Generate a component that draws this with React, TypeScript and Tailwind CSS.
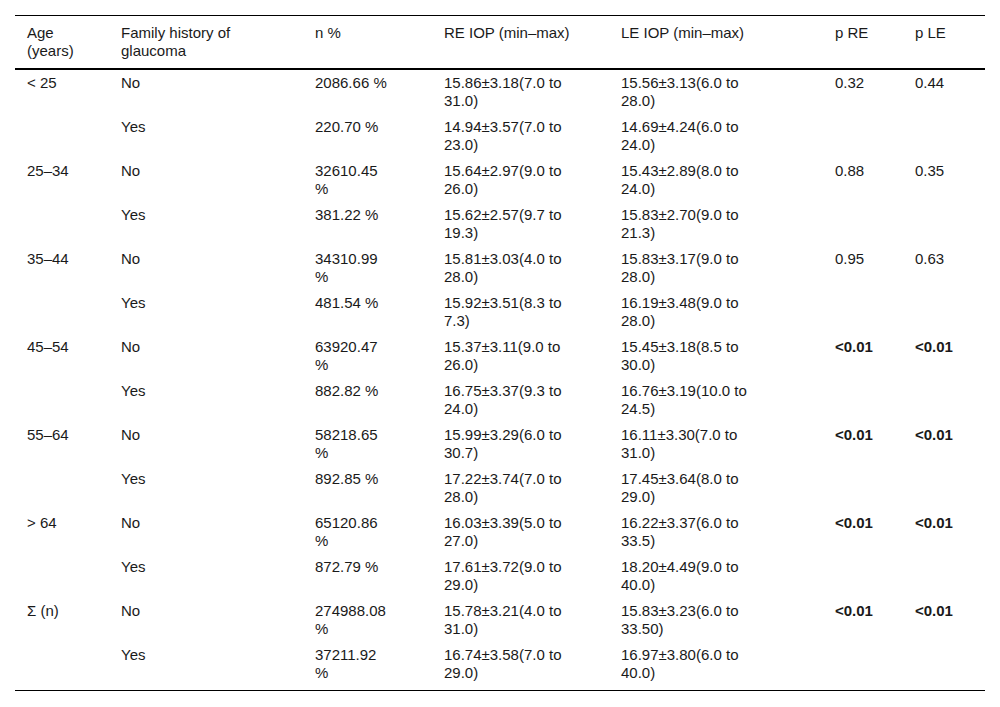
const rows = [
  { age: "< 25", fam: "No", n: "2086.66 %", re: "15.86±3.18(7.0 to 31.0)", le: "15.56±3.13(6.0 to 28.0)", pre: "0.32", ple: "0.44", bold: false },
  { age: "", fam: "Yes", n: "220.70 %", re: "14.94±3.57(7.0 to 23.0)", le: "14.69±4.24(6.0 to 24.0)", pre: "", ple: "", bold: false },
  { age: "25–34", fam: "No", n: "32610.45 %", re: "15.64±2.97(9.0 to 26.0)", le: "15.43±2.89(8.0 to 24.0)", pre: "0.88", ple: "0.35", bold: false },
  { age: "", fam: "Yes", n: "381.22 %", re: "15.62±2.57(9.7 to 19.3)", le: "15.83±2.70(9.0 to 21.3)", pre: "", ple: "", bold: false },
  { age: "35–44", fam: "No", n: "34310.99 %", re: "15.81±3.03(4.0 to 28.0)", le: "15.83±3.17(9.0 to 28.0)", pre: "0.95", ple: "0.63", bold: false },
  { age: "", fam: "Yes", n: "481.54 %", re: "15.92±3.51(8.3 to 7.3)", le: "16.19±3.48(9.0 to 28.0)", pre: "", ple: "", bold: false },
  { age: "45–54", fam: "No", n: "63920.47 %", re: "15.37±3.11(9.0 to 26.0)", le: "15.45±3.18(8.5 to 30.0)", pre: "<0.01", ple: "<0.01", bold: true },
  { age: "", fam: "Yes", n: "882.82 %", re: "16.75±3.37(9.3 to 24.0)", le: "16.76±3.19(10.0 to 24.5)", pre: "", ple: "", bold: false },
  { age: "55–64", fam: "No", n: "58218.65 %", re: "15.99±3.29(6.0 to 30.7)", le: "16.11±3.30(7.0 to 31.0)", pre: "<0.01", ple: "<0.01", bold: true },
  { age: "", fam: "Yes", n: "892.85 %", re: "17.22±3.74(7.0 to 28.0)", le: "17.45±3.64(8.0 to 29.0)", pre: "", ple: "", bold: false },
  { age: "> 64", fam: "No", n: "65120.86 %", re: "16.03±3.39(5.0 to 27.0)", le: "16.22±3.37(6.0 to 33.5)", pre: "<0.01", ple: "<0.01", bold: true },
  { age: "", fam: "Yes", n: "872.79 %", re: "17.61±3.72(9.0 to 29.0)", le: "18.20±4.49(9.0 to 40.0)", pre: "", ple: "", bold: false },
  { age: "Σ (n)", fam: "No", n: "274988.08 %", re: "15.78±3.21(4.0 to 31.0)", le: "15.83±3.23(6.0 to 33.50)", pre: "<0.01", ple: "<0.01", bold: true },
  { age: "", fam: "Yes", n: "37211.92 %", re: "16.74±3.58(7.0 to 29.0)", le: "16.97±3.80(6.0 to 40.0)", pre: "", ple: "", bold: false },
];

export default function App() {
  return (
    <div className="bg-white w-[1000px] h-[707px] pt-[15px] px-[15px] font-['Liberation_Sans',Arial,sans-serif] text-[15px] leading-[18px] text-[#1a1a1a]">
      <table className="table-fixed w-[970px] border-collapse border-t border-b border-black">
        <colgroup>
          <col className="w-[94px]" />
          <col className="w-[194px]" />
          <col className="w-[129px]" />
          <col className="w-[177px]" />
          <col className="w-[214px]" />
          <col className="w-[80px]" />
          <col className="w-[82px]" />
        </colgroup>
        <thead>
          <tr className="border-b-2 border-black align-top text-left">
            <th className="font-normal pl-3 pr-3 py-2">Age (years)</th>
            <th className="font-normal pl-3 pr-3 py-2">Family history of glaucoma</th>
            <th className="font-normal pl-3 pr-[41px] py-2">n %</th>
            <th className="font-normal pl-3 pr-[25px] py-2">RE IOP (min–max)</th>
            <th className="font-normal pl-3 pr-[62px] py-2">LE IOP (min–max)</th>
            <th className="font-normal pl-3 pr-2 py-2">p RE</th>
            <th className="font-normal pl-3 pr-2 py-2">p LE</th>
          </tr>
        </thead>
        <tbody>
          {rows.map((r, i) => {
            const pad = i === rows.length - 1 ? "pt-1 pb-2" : "py-1";
            return (
              <tr key={i} className="align-top">
                <td className={`pl-3 pr-3 ${pad}`}>{r.age}</td>
                <td className={`pl-3 pr-3 ${pad}`}>{r.fam}</td>
                <td className={`pl-3 pr-[41px] ${pad}`}>{r.n}</td>
                <td className={`pl-3 pr-[25px] ${pad}`}>{r.re}</td>
                <td className={`pl-3 pr-[62px] ${pad}`}>{r.le}</td>
                <td className={`pl-3 pr-2 ${pad} ${r.bold ? "font-bold" : ""}`}>{r.pre}</td>
                <td className={`pl-3 pr-2 ${pad} ${r.bold ? "font-bold" : ""}`}>{r.ple}</td>
              </tr>
            );
          })}
        </tbody>
      </table>
    </div>
  );
}
